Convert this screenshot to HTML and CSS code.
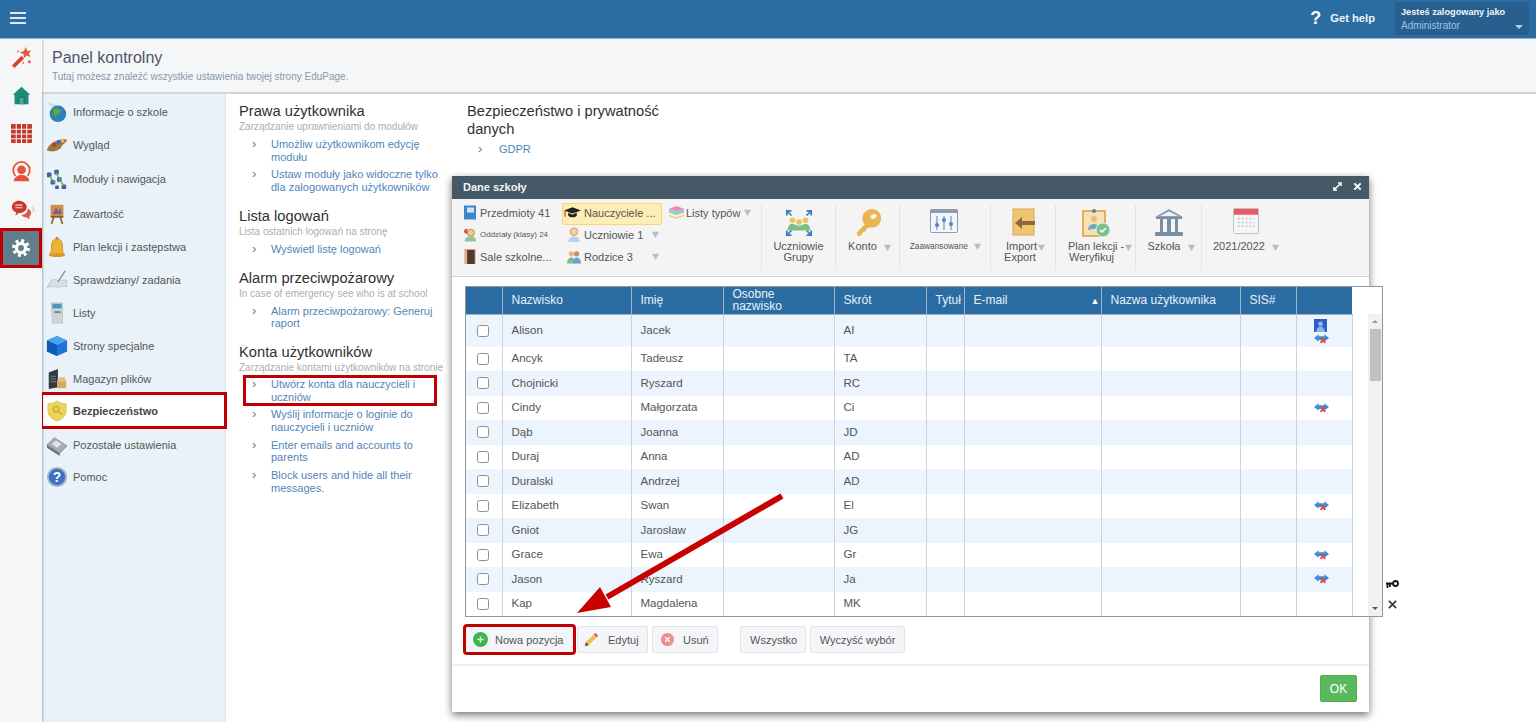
FILE: index.html
```html
<!DOCTYPE html>
<html lang="pl">
<head>
<meta charset="utf-8">
<title>Panel kontrolny</title>
<link rel="stylesheet" href="styles.css">
</head>
<body>
<svg class="defs" width="0" height="0">
  <defs>
    <symbol id="swap" viewBox="0 0 16 10">
      <path d="M0 4 5 0v2h6V0l5 4-5 4V6H5v2z" fill="#3c8fd8"/>
      <path d="M7 4l5 5M12 4l-5 5" stroke="#e8464a" stroke-width="2"/>
    </symbol>
    <symbol id="tri" viewBox="0 0 10 10"><path d="M1 2h8L5 9z" fill="#b9bcc0"/></symbol>
  </defs>
</svg>
<header class="topbar">
  <svg class="burger" viewBox="0 0 16 12"><path d="M0 1h16M0 6h16M0 11h16" stroke="#dfe9f2" stroke-width="1.800"/></svg>
  <div class="top-right">
    <span class="qmark">?</span>
    <span class="gethelp">Get help</span>
    <div class="userbox">
      <div class="user-a">Jesteś zalogowany jako</div>
      <div class="user-b">Administrator</div>
      <span class="user-caret"></span>
    </div>
  </div>
</header>
<div class="main">
  <nav class="rail">
    <a class="rail-item"><svg viewBox="0 0 24 24"><path d="M1 21 12 10l3 3L4 24z" fill="#d9412f"/><path d="M17 0l1.500 4.500 4.500-.5-2.800 3.500 2.300 3.800-4.500-1.500-3.300 3-.2-4.600L10 6l4.500-1.200z" fill="#e4583f"/><circle cx="21" cy="17" r="1.700" fill="#e4583f"/><circle cx="14" cy="18" r="1" fill="#e4583f"/><circle cx="8" cy="5" r="1" fill="#e4583f"/></svg></a>
    <a class="rail-item"><svg viewBox="0 0 24 24"><path d="M12 2 22 11h-2v11H4V11H2z" fill="#1c8d78"/><path d="M9 22v-8h6v8" fill="#4aa997" stroke="#0f6f5e"/></svg></a>
    <a class="rail-item"><svg viewBox="0 0 20 18"><rect width="20" height="18" rx="1" fill="#c23a2e"/><path d="M0 5h20M0 9.500h20M0 14h20M5 0v18M10 0v18M15 0v18" stroke="#f5f6f8"/></svg></a>
    <a class="rail-item"><svg viewBox="0 0 24 24"><path d="M5 17A9.500 9.500 0 1 1 19 17" fill="none" stroke="#e8503a" stroke-width="2"/><circle cx="12" cy="10" r="5" fill="#e8503a"/><path d="M3 23c1-5 5-7 9-7s8 2 9 7z" fill="#e8503a"/></svg></a>
    <a class="rail-item rail-chat"><svg viewBox="0 0 24 24"><path d="M1 9c0-4 4-7 8-7s9 3 9 7-4 7-9 7l-4 3 1-4c-3-1-5-3-5-6z" fill="#c7392d"/><path d="M19 11c3 1 4 3 4 5s-1 3-2 4v3l-3-2c-3 0-5-1-6-3 4 0 7-3 7-7z" fill="#dd5a45"/><path d="M5 7h8M5 10h8" stroke="#f5d9d5" stroke-width="1.300"/></svg></a>
    <a class="rail-item rail-active"><svg viewBox="0 0 24 24"><circle cx="12" cy="12" r="5.500" fill="none" stroke="#fff" stroke-width="4"/><circle cx="12" cy="12" r="9" fill="none" stroke="#fff" stroke-width="3.500" stroke-dasharray="3.600 3.470"/></svg></a>
  </nav>
  <div class="page">
    <div class="page-head">
      <h1 class="page-title">Panel kontrolny</h1>
      <p class="page-sub">Tutaj możesz znaleźć wszystkie ustawienia twojej strony EduPage.</p>
    </div>
    <div class="page-body">
      <ul class="side">
        <li class="side-item"><svg viewBox="0 0 24 24"><path d="M0 1 14 5l-4 4z" fill="#d5dbe0"/><circle cx="13" cy="14" r="9" fill="#2f7fb8"/><path d="M8 9c3-2 7-1 8 2s-5 2-5 6-4-5-3-8z" fill="#5fa83d"/></svg><span>Informacje o szkole</span></li>
        <li class="side-item"><svg viewBox="0 0 24 24"><path d="M1 18C2 10 14 4 23 6c-1 4-5 5-6 8s-8 7-16 4z" fill="#a9763f"/><circle cx="9" cy="12" r="2.500" fill="#c0392b"/><circle cx="14" cy="9" r="2.500" fill="#4664c4"/><circle cx="18" cy="7.500" r="1.800" fill="#f0c23c"/><circle cx="7" cy="16" r="1.800" fill="#3f9d4a"/></svg><span>Wygląd</span></li>
        <li class="side-item side-nudge1"><svg viewBox="0 0 24 24"><g fill="#3d5da8"><rect x="1" y="5" width="5" height="5" rx="1"/><rect x="9" y="2" width="5" height="5" rx="1"/><rect x="12" y="10" width="5" height="5" rx="1"/><rect x="5" y="13" width="5" height="5" rx="1"/><rect x="17" y="18" width="5" height="5" rx="1"/><rect x="10" y="19" width="4" height="4" rx="1"/></g><path d="M4 9l6 8M11 5l4 8 5 7" stroke="#66b04a" stroke-width="1.500" fill="none"/></svg><span>Moduły i nawigacja</span></li>
        <li class="side-item side-nudge2"><svg viewBox="0 0 24 24"><path d="M6 23 9 13M18 23l-3-10" stroke="#9a6a32" stroke-width="2"/><rect x="5" y="2" width="14" height="12" fill="#c98f4b"/><path d="M7 12l4-7 2 4 3-3 1 6z" fill="#7f5a8e"/><rect x="5" y="14" width="14" height="2" fill="#8a5c2a"/></svg><span>Zawartość</span></li>
        <li class="side-item"><svg viewBox="0 0 24 24"><path d="M4 20c2-2 2-5 2-9s2-8 6-8 6 4 6 8 0 7 2 9z" fill="#eeb32e" stroke="#b9831a" stroke-width=".8"/><ellipse cx="12" cy="21" rx="9" ry="2" fill="#d49a24"/><circle cx="12" cy="2.500" r="1.500" fill="#b9831a"/></svg><span>Plan lekcji i zastępstwa</span></li>
        <li class="side-item"><svg viewBox="0 0 24 24"><path d="M1 20 6 12c4-1 6 0 7 1 2-1 5-1 9-1l1 7c-5 0-8 0-10 1-3-1-8-1-12 0z" fill="#d8dde6" stroke="#a9afb8" stroke-width=".6"/><path d="M13 14 21 2" stroke="#7d8fb0" stroke-width="1.500"/></svg><span>Sprawdziany/ zadania</span></li>
        <li class="side-item"><svg viewBox="0 0 24 24"><path d="M6 1h12v22H7z" fill="#cfd4d8" stroke="#a7adb3" stroke-width=".6"/><rect x="7" y="2" width="10" height="5" fill="#4a93c4"/><rect x="9" y="10" width="7" height="2" fill="#3aa26b"/></svg><span>Listy</span></li>
        <li class="side-item"><svg viewBox="0 0 24 24"><path d="M12 1 23 6v12l-11 5L1 18V6z" fill="#1b74d6"/><path d="M12 1 23 6 12 11 1 6z" fill="#4aa4ee"/><path d="M12 11v12L1 18V6z" fill="#0e5cb5"/></svg><span>Strony specjalne</span></li>
        <li class="side-item"><svg viewBox="0 0 24 24"><path d="M3 5 13 1v20L3 23z" fill="#33393f"/><path d="M5 9h6M5 12h6M5 15h6" stroke="#828a92"/><rect x="12" y="13" width="10" height="9" fill="#d6a866"/><rect x="14" y="10" width="7" height="5" fill="#e2be84"/></svg><span>Magazyn plików</span></li>
        <li class="side-item side-active"><svg viewBox="0 0 24 24"><path d="M12 1c3 2 6 3 10 3v8c0 5-4 9-10 11C6 21 2 17 2 12V4c4 0 7-1 10-3z" fill="#ecd45a" stroke="#c9b64d" stroke-width=".6"/><circle cx="11" cy="10" r="3" fill="none" stroke="#c4ae3c" stroke-width="1.500"/><path d="M13 12l5 4" stroke="#c4ae3c" stroke-width="1.500"/></svg><span>Bezpieczeństwo</span></li>
        <li class="side-item"><svg viewBox="0 0 24 24"><path d="M1 12 9 4l14 9-8 8z" fill="#a8aeb4" stroke="#777d83" stroke-width=".7"/><path d="M6 11l5-4 6 4-5 4z" fill="#e1e3e6"/><path d="M1 12v3l14 9v-3z" fill="#6f747a"/></svg><span>Pozostałe ustawienia</span></li>
        <li class="side-item side-last"><svg viewBox="0 0 24 24"><circle cx="12" cy="12" r="10" fill="#3b73c4" stroke="#a8b6c6" stroke-width="2"/><text class="help-q" x="12" y="17.500" text-anchor="middle">?</text></svg><span>Pomoc</span></li>
      </ul>
      <div class="col col-a">
        <section class="group">
          <h2>Prawa użytkownika</h2>
          <p class="group-sub">Zarządzanie uprawnieniami do modułów</p>
          <a class="lnk"><i>›</i><span>Umożliw użytkownikom edycję modułu</span></a>
          <a class="lnk"><i>›</i><span>Ustaw moduły jako widoczne tylko dla zalogowanych użytkowników</span></a>
        </section>
        <section class="group">
          <h2>Lista logowań</h2>
          <p class="group-sub">Lista ostatnich logowań na stronę</p>
          <a class="lnk"><i>›</i><span>Wyświetl listę logowań</span></a>
        </section>
        <section class="group">
          <h2>Alarm przeciwpożarowy</h2>
          <p class="group-sub">In case of emergency see who is at school</p>
          <a class="lnk"><i>›</i><span>Alarm przeciwpożarowy: Generuj raport</span></a>
        </section>
        <section class="group">
          <h2>Konta użytkowników</h2>
          <p class="group-sub group-sub-tight">Zarządzanie kontami użytkowników na stronie</p>
          <a class="lnk lnk-marked"><i>›</i><span>Utwórz konta dla nauczycieli i uczniów</span></a>
          <a class="lnk"><i>›</i><span>Wyślij informacje o loginie do nauczycieli i uczniów</span></a>
          <a class="lnk"><i>›</i><span>Enter emails and accounts to parents</span></a>
          <a class="lnk"><i>›</i><span>Block users and hide all their messages.</span></a>
        </section>
      </div>
      <div class="col col-b">
        <section class="group">
          <h2 class="h2-b">Bezpieczeństwo i prywatność danych</h2>
          <a class="lnk"><i>›</i><span>GDPR</span></a>
        </section>
      </div>
    </div>
  </div>
</div>

<div class="dialog">
  <div class="dlg-title">
    <span>Dane szkoły</span>
    <svg class="dlg-ico" viewBox="0 0 10 10"><path d="M1 9 9 1M5.500 1H9v3.500M1 5.500V9h3.500" stroke="#fff" stroke-width="1.600" fill="none"/></svg>
    <svg class="dlg-ico" viewBox="0 0 10 10"><path d="M1.500 1.500l7 7M8.500 1.500l-7 7" stroke="#fff" stroke-width="2.200"/></svg>
  </div>
  <div class="toolbar">
    <div class="tb-grid">
      <div class="tb-cell"><svg viewBox="0 0 14 14"><rect x="1" width="12" height="14" fill="#3f86c9"/><rect x="4" y="2" width="7" height="5" fill="#d4e4f4"/></svg><span>Przedmioty 41</span></div>
      <div class="tb-cell tb-on"><svg viewBox="0 0 16 12"><path d="M0 4 8 1l8 3-8 3z" fill="#222"/><path d="M4 6v3c2 2 6 2 8 0V6L8 8z" fill="#222"/><path d="M1 4v6" stroke="#a33" /></svg><span>Nauczyciele ...</span></div>
      <div class="tb-cell tb-types"><svg viewBox="0 0 16 14"><path d="M8 0l8 3-8 3-8-3z" fill="#ee8fa0"/><path d="M0 5l8 3 8-3v2l-8 3-8-3z" fill="#8fd0a0"/><path d="M0 9l8 3 8-3v2l-8 3-8-3z" fill="#f0d070"/><path d="M0 3l8 3 8-3v2L8 8 0 5z" fill="#8fc0ee"/></svg><span>Listy typów</span><svg class="tri"><use href="#tri"/></svg></div>
      <div class="tb-cell tb-small"><svg viewBox="0 0 16 16"><circle cx="9" cy="6" r="4" fill="#f0c98e" stroke="#c97a3a"/><path d="M2 16c0-4 3-6 7-6s6 2 6 6z" fill="#8fc79a"/><path d="M1 5c0-3 2-4 4-4v6H3z" fill="#d9534f"/></svg><span>Oddziały (klasy) 24</span></div>
      <div class="tb-cell tb-mid"><svg viewBox="0 0 14 16"><circle cx="7" cy="5" r="4" fill="#f5d3a5" stroke="#d88f5a"/><path d="M1 16c0-4 2-6 6-6s6 2 6 6z" fill="#b5d3ef"/></svg><span>Uczniowie 1</span><svg class="tri tri-far"><use href="#tri"/></svg></div>
      <div class="tb-cell tb-blank"></div>
      <div class="tb-cell"><svg viewBox="0 0 14 16"><rect x="1" width="12" height="16" fill="#e8a87c"/><rect x="4" y="1" width="8" height="15" fill="#4b3a33"/></svg><span>Sale szkolne...</span></div>
      <div class="tb-cell tb-mid"><svg viewBox="0 0 16 16"><circle cx="5" cy="5" r="3" fill="#e8b98a"/><circle cx="11" cy="5" r="3" fill="#c98f5c"/><path d="M0 16c0-4 2-7 5-7s4 3 4 7z" fill="#7fbf8f"/><path d="M7 16c0-4 1-7 4-7s5 3 5 7z" fill="#6f9fd8"/></svg><span>Rodzice 3</span><svg class="tri tri-far2"><use href="#tri"/></svg></div>
      <div class="tb-cell tb-blank"></div>
    </div>
    <div class="tb-big w-group"><svg viewBox="0 0 32 32"><path d="M3 3l5 5M3 8V3h5M29 3l-5 5M29 8V3h-5M3 29l5-5M3 24v5h5M29 29l-5-5M29 24v5h-5" stroke="#3c78c8" stroke-width="1.800" fill="none"/><circle cx="9" cy="13" r="3" fill="#e8c65a"/><circle cx="16" cy="15" r="3" fill="#e8c65a"/><circle cx="23" cy="13" r="3" fill="#e8c65a"/><path d="M4 24c0-5 2-7 5-7s5 2 7 2 4-2 7-2 5 2 5 7z" fill="#7dbd8a"/></svg><div class="tb-label">Uczniowie<br>Grupy</div></div>
    <div class="tb-big w-konto"><svg viewBox="0 0 32 32"><path d="M15 15 4 26l1 4 4-1 1-3 3-1 1-3 3-1z" fill="#e8b454"/><circle cx="20" cy="11" r="10" fill="#e8b454"/><ellipse cx="22" cy="9" rx="3.500" ry="2.500" fill="#fbf3e0" transform="rotate(-30 22 9)"/></svg><div class="tb-label lab-konto">Konto <svg class="tri"><use href="#tri"/></svg></div></div>
    <div class="tb-big w-zaaw"><svg viewBox="0 0 30 28"><rect x=".5" y=".5" width="27" height="23" rx="1" fill="#f2f6fa" stroke="#8c9cab"/><rect x=".5" y=".5" width="27" height="3.500" fill="#8c9cab"/><path d="M7 7v14M14 7v14M21 7v14" stroke="#4a86c2"/><circle cx="7" cy="16" r="2" fill="#4a86c2"/><circle cx="14" cy="11" r="2" fill="#4a86c2"/><circle cx="21" cy="15" r="2" fill="#4a86c2"/></svg><div class="tb-label tb-tiny">Zaawansowane <svg class="tri"><use href="#tri"/></svg></div></div>
    <div class="tb-big w-imp"><svg viewBox="0 0 28 30"><rect x="4" y="1" width="21" height="26" fill="#f0c470" stroke="#d9a951"/><path d="M26 13H13V9l-7 6 7 6v-4h13z" fill="#8a6a35"/></svg><div class="tb-label tb-imp"><span class="imp-a">Import<svg class="tri tri-tight"><use href="#tri"/></svg></span><br>Export</div></div>
    <div class="tb-big w-plan"><svg viewBox="0 0 30 30"><rect x="2" y="3" width="22" height="25" fill="#f8e1b0" stroke="#dd9a3c" stroke-width="1.500"/><circle cx="13" cy="3" r="2" fill="#5d7a9b"/><circle cx="13" cy="11" r="3" fill="#e8b98a"/><path d="M7 22c0-4 3-6 6-6s5 2 5 4z" fill="#6fa6d9"/><circle cx="22" cy="22" r="7" fill="#7cc08a" stroke="#e8f3ea"/><path d="M19 22l2 2 4-4" stroke="#fff" stroke-width="1.500" fill="none"/></svg><div class="tb-label tb-planlab">Plan lekcji -<svg class="tri tri-tight"><use href="#tri"/></svg><br><span class="plan-b">Weryfikuj</span></div></div>
    <div class="tb-big w-szk"><svg viewBox="0 0 30 30"><path d="M15 1 29 9H1z" fill="#8c9db0"/><path d="M15 3.500 24 8H6z" fill="#eef2f5"/><rect x="2" y="9" width="26" height="2" fill="#7b8da0"/><path d="M6 11h3v13H6zM13 11h4v13h-4zM21 11h3v13h-3z" fill="#7b8da0"/><rect x="1" y="24" width="28" height="4" rx="1" fill="#7b8da0"/></svg><div class="tb-label lab-szk">Szkoła <svg class="tri"><use href="#tri"/></svg></div></div>
    <div class="tb-big w-year"><svg viewBox="0 0 28 28"><rect x=".5" y=".5" width="26" height="26" rx="1" fill="#f5f6f7" stroke="#b9bfc5"/><path d="M1 1h25v6H1z" fill="#e85a63"/><path d="M5 11h17M5 15h17M5 19h17" stroke="#c3c9cf" stroke-dasharray="2 2" stroke-width="1.600"/></svg><div class="tb-label">2021/2022 <svg class="tri"><use href="#tri"/></svg></div></div>
  </div>

  <div class="grid-wrap">
    <table class="grid">
      <colgroup>
        <col class="c0"><col class="c1"><col class="c2"><col class="c3"><col class="c4"><col class="c5"><col class="c6"><col class="c7"><col class="c8"><col class="c9">
      </colgroup>
      <thead>
        <tr><th></th><th>Nazwisko</th><th>Imię</th><th class="th-wrap">Osobne nazwisko</th><th>Skrót</th><th class="th-t">Tytuł</th><th class="th-sort">E-mail<b>▲</b></th><th>Nazwa użytkownika</th><th>SIS#</th><th></th></tr>
      </thead>
      <tbody>
        <tr class="first"><td><input type="checkbox"></td><td>Alison</td><td>Jacek</td><td></td><td>AI</td><td></td><td></td><td></td><td></td><td class="ics"><svg class="ic-user" viewBox="0 0 12 12"><rect width="12" height="12" fill="#2a5fc4"/><circle cx="6" cy="4.500" r="2.200" fill="#8fb4ec"/><path d="M2 12c0-3 2-5 4-5s4 2 4 5z" fill="#8fb4ec"/></svg><svg class="ic-swap"><use href="#swap"/></svg></td></tr>
        <tr><td><input type="checkbox"></td><td>Ancyk</td><td>Tadeusz</td><td></td><td>TA</td><td></td><td></td><td></td><td></td><td></td></tr>
        <tr><td><input type="checkbox"></td><td>Chojnicki</td><td>Ryszard</td><td></td><td>RC</td><td></td><td></td><td></td><td></td><td></td></tr>
        <tr><td><input type="checkbox"></td><td>Cindy</td><td>Małgorzata</td><td></td><td>Ci</td><td></td><td></td><td></td><td></td><td class="ics"><svg class="ic-swap"><use href="#swap"/></svg></td></tr>
        <tr><td><input type="checkbox"></td><td>Dąb</td><td>Joanna</td><td></td><td>JD</td><td></td><td></td><td></td><td></td><td></td></tr>
        <tr><td><input type="checkbox"></td><td>Duraj</td><td>Anna</td><td></td><td>AD</td><td></td><td></td><td></td><td></td><td></td></tr>
        <tr><td><input type="checkbox"></td><td>Duralski</td><td>Andrzej</td><td></td><td>AD</td><td></td><td></td><td></td><td></td><td></td></tr>
        <tr><td><input type="checkbox"></td><td>Elizabeth</td><td>Swan</td><td></td><td>El</td><td></td><td></td><td></td><td></td><td class="ics"><svg class="ic-swap"><use href="#swap"/></svg></td></tr>
        <tr><td><input type="checkbox"></td><td>Gniot</td><td>Jarosław</td><td></td><td>JG</td><td></td><td></td><td></td><td></td><td></td></tr>
        <tr><td><input type="checkbox"></td><td>Grace</td><td>Ewa</td><td></td><td>Gr</td><td></td><td></td><td></td><td></td><td class="ics"><svg class="ic-swap"><use href="#swap"/></svg></td></tr>
        <tr><td><input type="checkbox"></td><td>Jason</td><td>Ryszard</td><td></td><td>Ja</td><td></td><td></td><td></td><td></td><td class="ics"><svg class="ic-swap"><use href="#swap"/></svg></td></tr>
        <tr class="last"><td><input type="checkbox"></td><td>Kap</td><td>Magdalena</td><td></td><td>MK</td><td></td><td></td><td></td><td></td><td></td></tr>
      </tbody>
    </table>
    <div class="scroll-gutter">
      <div class="scrollbar">
        <span class="sb-up"></span>
        <span class="sb-thumb"></span>
        <span class="sb-down"></span>
      </div>
    </div>
  </div>

  <div class="actions">
    <button class="btn btn-marked"><svg viewBox="0 0 16 16"><circle cx="8" cy="8" r="8" fill="#3db54a"/><path d="M8 4.500v7M4.500 8h7" stroke="#d8f3dc" stroke-width="1.500"/></svg>Nowa pozycja</button>
    <button class="btn btn-edit"><svg viewBox="0 0 16 16"><path d="M1 15l1-4L12 1l3 3L5 14z" fill="#f1bd4c"/><path d="M12 1l3 3-1.500 1.500-3-3z" fill="#d9534f"/><path d="M1 15l1-4 3 3z" fill="#5b4a2f"/></svg>Edytuj</button>
    <button class="btn btn-del"><svg viewBox="0 0 16 16"><circle cx="8" cy="8" r="7" fill="#f08d92"/><path d="M5.500 5.500l5 5M10.500 5.500l-5 5" stroke="#fff" stroke-width="1.500"/></svg>Usuń</button>
    <button class="btn btn-all">Wszystko</button>
    <button class="btn btn-clear">Wyczyść wybór</button>
  </div>
  <div class="dlg-foot"><button class="ok">OK</button></div>
</div>

<div class="side-tools">
  <svg viewBox="0 0 14 8"><circle cx="10.500" cy="3.500" r="2.500" fill="none" stroke="#111" stroke-width="1.800"/><path d="M8 3.500H1M2.500 3.500V8M5 3.500V7" stroke="#111" stroke-width="1.800"/></svg>
  <svg viewBox="0 0 10 10"><path d="M1 1l8 8M9 1 1 9" stroke="#333" stroke-width="1.800"/></svg>
</div>

<svg class="arrow" viewBox="0 0 230 130">
  <path d="M205 3 30 104" stroke="#c80000" stroke-width="6" fill="none"/>
  <path d="M0 120 23 94 34 114z" fill="#c80000"/>
</svg>
</body>
</html>
```

FILE: styles.css
```css
* { box-sizing: border-box; }
html, body { margin: 0; height: 722px; overflow: hidden; }
body { font-family: "Liberation Sans", Arial, sans-serif; font-size: 12px; color: #444; background: #fff; position: relative; display: flex; flex-direction: column; }
.defs { position: absolute; }
h1, h2, p, ul { margin: 0; padding: 0; }
ul { list-style: none; }

/* top bar */
.topbar { height: 39px; flex: none; background: #2b6ca3; border-bottom: 1px solid #9fb0bf; display: flex; align-items: center; justify-content: space-between; padding: 0 10px 2px; position: relative; z-index: 2; }
.burger { width: 16px; height: 12px; }
.top-right { display: flex; align-items: center; }
.qmark { color: #fff; font-size: 18px; font-weight: 700; margin-right: 9px; }
.gethelp { color: #f0f4f8; font-weight: 700; font-size: 11.200px; margin-right: 20px; }
.userbox { width: 134px; height: 33px; background: #27608f; border-radius: 2px; padding: 4px 6px; position: relative; margin-right: -3px; }
.user-a { color: #f2f5f8; font-weight: 700; font-size: 9.200px; line-height: 13px; white-space: nowrap; }
.user-b { color: #9fc2e2; font-size: 10px; line-height: 13px; }
.user-caret { position: absolute; right: 6px; bottom: 6px; border: 4px solid transparent; border-top-color: #b9cfe2; border-bottom-width: 0; }

.main { flex: 1; display: flex; min-height: 0; }

/* rail */
.rail { width: 42px; flex: none; background: #f5f6f8; box-shadow: 1px 0 2px rgba(0,0,0,.2); display: flex; flex-direction: column; padding-top: 0; position: relative; z-index: 1; }
.rail-item { height: 38px; display: flex; align-items: center; justify-content: center; }
.rail-item:first-child { margin-top: -1px; }
.rail-item svg { width: 21px; height: 21px; }
.rail-chat { position: relative; }
.rail-chat::after { content: "›"; position: absolute; left: 31px; top: 11px; color: #c9ccd0; font-size: 13px; }
.rail-active { height: 40px; background: #607d8b; outline: 3px solid #c00000; outline-offset: -3px; width: 42px; }
.rail-active svg { width: 20px; height: 20px; }

/* page */
.page { flex: 1; min-width: 0; display: flex; flex-direction: column; }
.page-head { height: 55px; flex: none; background: #f5f6f8; border-bottom: 2px solid #d3d5d8; padding: 9px 10px 0; }
.page-title { font-size: 16px; font-weight: 400; color: #4a5568; line-height: 20px; }
.page-sub { font-size: 10px; color: #8a97a6; margin-top: 3px; line-height: 12px; }
.page-body { flex: 1; display: flex; min-height: 0; }

.side { width: 184px; flex: none; background: #e9f2f8; padding-top: 1px; border-right: 1px solid #dfe6ec; box-shadow: inset 2px 0 2px -1px rgba(0,0,0,.08); }
.side-item { height: 33px; display: flex; align-items: center; padding-left: 4px; color: #555; font-size: 11px; position: relative; }
.side-nudge1 { margin-top: 1px; }
.side-nudge2 { margin-top: 2px; }
.side-last { margin-top: -1px; }
.side-item svg { width: 22px; height: 22px; margin-right: 5px; flex: none; }
.side-active { background: #fff; font-weight: 700; color: #444; outline: 3px solid #c00000; outline-offset: -1px; margin-top: -1px; margin-bottom: 1px; }
.help-q { fill: #fff; font: 700 15px "Liberation Sans", sans-serif; }

.col { flex: none; }
.col-a { width: 228px; padding: 8px 0 0 13px; }
.col-b { width: 223px; padding: 8px 0 0 13px; }
.group { margin-bottom: 13px; }
.group h2 { font-size: 14.700px; font-weight: 400; color: #2f3133; line-height: 18px; }
.h2-b { width: 200px; line-height: 18px; }
.group-sub { font-size: 10px; color: #adadad; line-height: 13px; margin-bottom: 5px; white-space: nowrap; }
.group-sub-tight { margin-bottom: 4px; }
.lnk { display: flex; padding-left: 13px; width: 205px; font-size: 11px; color: #4f86b8; line-height: 12.700px; margin-bottom: 5px; }
.lnk i { width: 19px; flex: none; font-style: normal; color: #777; font-size: 13px; }
.col-a .lnk-marked { outline: 3px solid #c00000; outline-offset: 0; width: 188px; margin-left: 7px; padding-left: 6px; }
.col-b .lnk { margin-top: 5px; padding-left: 11px; }
.col-b .lnk i { width: 21px; }

/* dialog */
.dialog { position: absolute; left: 452px; top: 176px; width: 917px; height: 536px; background: #fff; box-shadow: 0 3px 8px rgba(0,0,0,.55); display: flex; flex-direction: column; z-index: 3; }
.dlg-title { height: 23px; flex: none; background: #455a66; color: #f2f4f5; font-size: 11px; font-weight: 700; display: flex; align-items: center; padding: 0 7px 2px 11px; }
.dlg-title span { flex: 1; }
.dlg-ico { width: 9px; height: 9px; margin-left: 11px; }
.toolbar { height: 78px; flex: none; background: #f4f4f4; border-bottom: 1px solid #d0d2d4; display: flex; padding: 5px 0 0 10px; }
.tb-grid { width: 300px; height: 66px; display: grid; grid-template-columns: 100px 107px 93px; grid-auto-rows: 22px; border-right: 1px solid #e4e4e4; }
.tb-cell { display: flex; align-items: center; font-size: 11px; color: #555; white-space: nowrap; padding-left: 1px; padding-bottom: 5px; position: relative; }
.tb-cell > svg:first-child { width: 14px; height: 15px; margin-right: 3px; flex: none; }
.tb-mid { padding-left: 5px; }
.tb-on { background: #fdeeb5; border: 1px solid #f5d77a; border-radius: 2px; height: 22px; width: 100px; padding: 0 0 3px 1px; margin-top: -1px; }
.tb-on > svg:first-child { width: 17px; margin-right: 3px; }
.tb-types { padding-left: 0; }
.tb-types > svg:first-child { width: 15px; margin-right: 2px; }
.tb-small { font-size: 8px; }
.tri { width: 9px; height: 9px; display: inline-block; vertical-align: middle; margin-left: 3px; }
.tri-far { margin-left: 8px; }
.tri-far2 { margin-left: 18px; }
.tri-tight { margin-left: 0; }
.tb-big { flex: none; height: 66px; border-right: 1px solid #e4e4e4; text-align: center; padding-top: 4px; }
.tb-big > svg { display: block; margin: 0 auto; width: 30px; height: 30px; }
.tb-label { font-size: 11px; color: #555; line-height: 11px; margin-top: 3px; white-space: nowrap; }
.tb-tiny { font-size: 8.300px; padding-left: 2px; }
.tb-imp { padding-right: 6px; }
.imp-a { margin-left: 12px; }
.lab-konto { padding-left: 5px; }
.lab-szk { padding-left: 6px; }
.tb-planlab { text-align: left; padding-left: 12px; }
.plan-b { margin-left: 1px; }
.w-group { width: 74px; }
.w-konto { width: 64px; }
.w-zaaw { width: 91px; }
.w-imp { width: 65px; }
.w-plan { width: 80px; }
.w-szk { width: 66px; }
.w-year { width: 89px; border-right: 0; }
.w-year > svg { width: 27px; height: 27px; margin-bottom: 6px; }

.grid-wrap { width: 918px; height: 331px; flex: none; margin: 9px 0 0 13px; border: 1px solid #8f969d; display: flex; background: #fff; }
.grid { width: 886px; border-collapse: collapse; table-layout: fixed; font-size: 11.500px; color: #555; flex: none; align-self: flex-start; }
.c0 { width: 36px; } .c1 { width: 129px; } .c2 { width: 92px; } .c3 { width: 111px; } .c4 { width: 92px; } .c5 { width: 38px; } .c6 { width: 137px; } .c7 { width: 139px; } .c8 { width: 56px; } .c9 { width: 56px; }
.grid th { height: 27px; background: #2b6ca3; color: #e9f1f8; font-weight: 400; font-size: 12px; text-align: left; padding: 0 9px; border-right: 1px solid #9db5c9; border-bottom: 1px solid #9db5c9; line-height: 12.500px; }
.grid th:last-child { border-right: 0; }
.grid .th-wrap { padding-bottom: 0; }
.grid .th-t { padding: 0 0 0 9px; white-space: nowrap; overflow: hidden; }
.th-sort { position: relative; }
.th-sort b { position: absolute; right: 1px; top: 8px; font-size: 9px; font-weight: 400; color: #fff; }
.grid td { height: 24.500px; padding: 0 9px 1px; border-right: 1px solid #ccd3da; white-space: nowrap; }
.grid td:first-child { text-align: center; padding: 0 1px 1px 0; }
.grid td:last-child { border-right: 1px solid #ccd3da; }
.grid tbody tr:nth-child(odd) td { background: #ecf4fd; }
.grid .first td { height: 32.500px; }
.grid input { appearance: none; width: 12px; height: 12px; margin: 3px 0 0; border: 1px solid #8f8f8f; border-radius: 2.500px; background: #fff; display: inline-block; }
.grid .ics { text-align: center; padding: 0 6px 0 0; line-height: 0; }
.ic-user { width: 13px; height: 13px; display: block; margin: 2px auto 0; transform: translateX(-1px); }
.ic-swap { width: 15px; height: 10px; }
.first .ic-swap { display: block; margin: 2px auto 0; }

.scroll-gutter { flex: 1; display: flex; justify-content: flex-end; padding-top: 27px; }
.scrollbar { width: 14px; background: #f1f1f1; display: flex; flex-direction: column; align-items: center; }
.sb-up { height: 3px; flex: none; width: 0; border: 3px solid transparent; border-bottom: 3px solid #999; border-top: 0; margin-top: 6px; margin-bottom: 6px; }
.sb-thumb { width: 11px; height: 52px; background: #c1c1c1; flex: none; }
.sb-down { margin-top: auto; margin-bottom: 6px; width: 0; border: 3.500px solid transparent; border-top: 3.500px solid #555; border-bottom: 0; }

.actions { display: flex; margin: 9px 0 0 13px; height: 27px; flex: none; }
.btn { height: 27px; border: 1px solid #e2e4e8; border-radius: 2px; background: #f3f5f8; color: #555; font: 11px "Liberation Sans", sans-serif; padding: 0 9px; display: flex; align-items: center; margin: 0 4px 0 0; white-space: nowrap; }
.btn svg { width: 15px; height: 15px; margin-right: 9px; flex: none; }
.btn-marked { outline: 3px solid #c00000; outline-offset: -1px; width: 109px; padding-left: 7px; margin-right: 3px; }
.btn-marked svg { margin-right: 7px; }
.btn-edit { width: 71px; padding-left: 6px; }
.btn-del { width: 66px; padding-left: 7px; margin-right: 22px; }
.btn-del svg { margin-right: 8px; }
.btn-all { width: 66px; }
.btn-clear { width: 95px; justify-content: center; padding: 0; }
.dlg-foot { margin-top: 11px; border-top: 2px solid #eeeeee; flex: 1; display: flex; justify-content: flex-end; padding: 9px 12px 0 0; }
.ok { width: 37px; height: 27px; background: #5cb85c; border: 1px solid #4cae4c; border-radius: 2px; color: #fff; font: 12px "Liberation Sans", sans-serif; padding: 0; }

.side-tools { position: absolute; left: 1385px; top: 580px; width: 14px; display: flex; flex-direction: column; align-items: center; gap: 12px; z-index: 4; }
.side-tools svg:first-child { width: 14px; height: 8px; }
.side-tools svg:last-child { width: 9px; height: 9px; }
.arrow { position: absolute; left: 577px; top: 493px; width: 230px; height: 130px; z-index: 5; overflow: visible; }
```
